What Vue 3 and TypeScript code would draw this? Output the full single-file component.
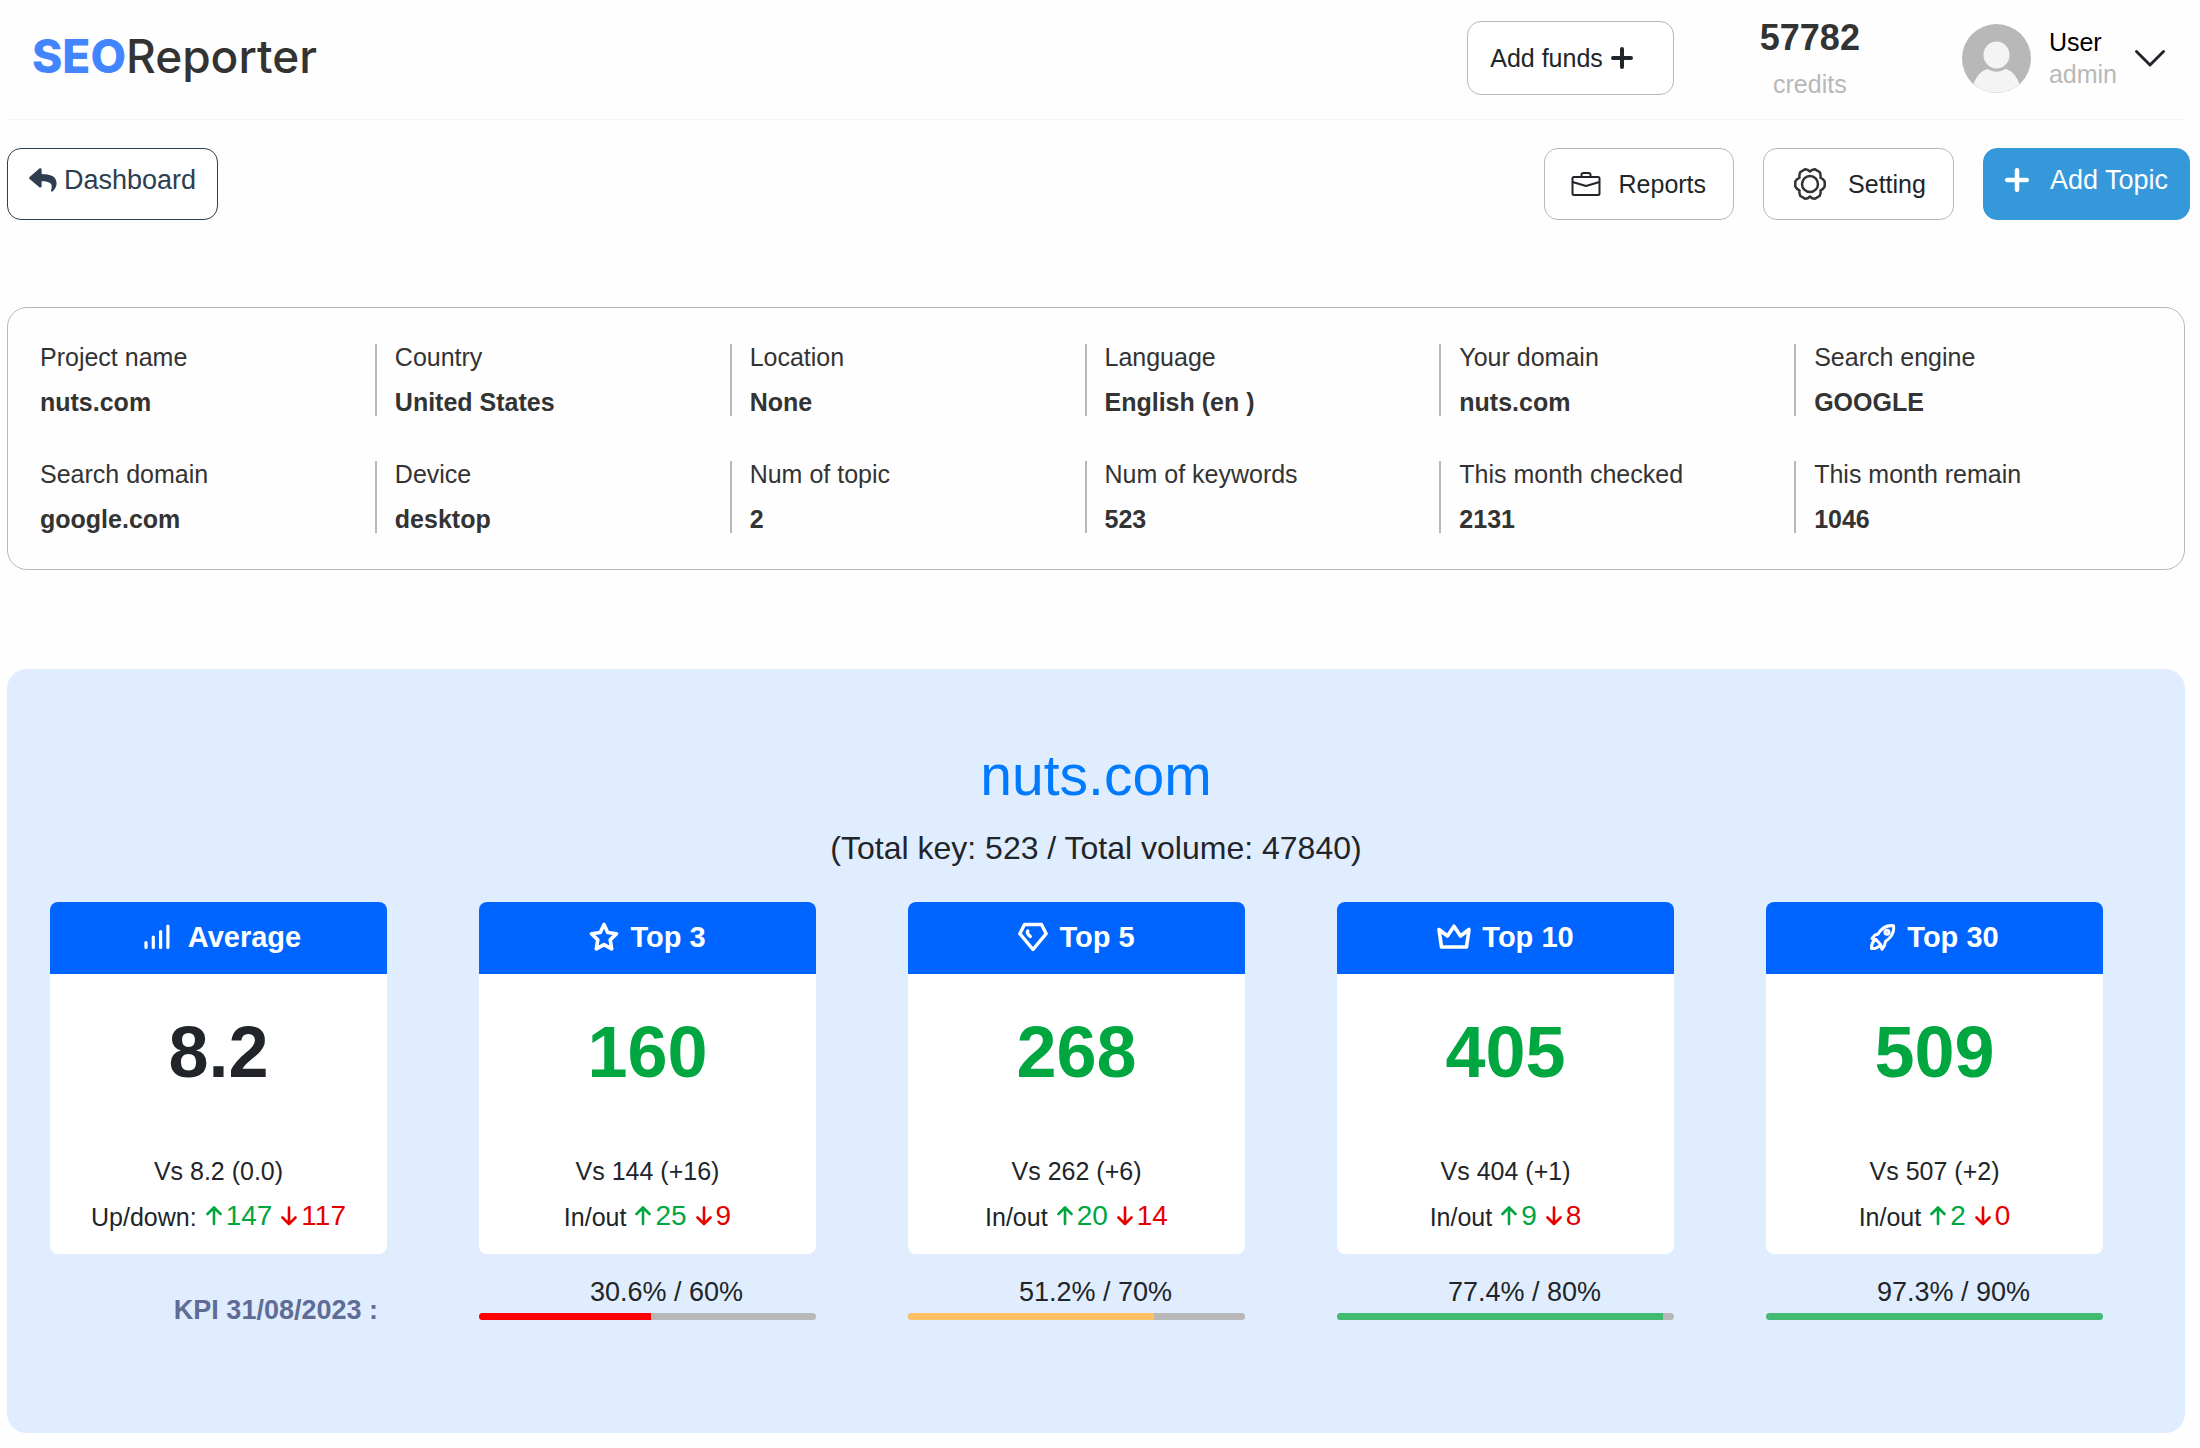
<script setup lang="ts">
interface Detail {
  label: string
  value: string
}

interface Kpi {
  current: number
  target: number
  color: string
}

interface Metric {
  icon: 'bars' | 'star' | 'diamond' | 'crown' | 'rocket'
  title: string
  value: string
  neutral?: boolean
  versus: string
  changeLabel: string
  up: number
  down: number
  kpi?: Kpi
}

const details: Detail[] = [
  { label: 'Project name', value: 'nuts.com' },
  { label: 'Country', value: 'United States' },
  { label: 'Location', value: 'None' },
  { label: 'Language', value: 'English (en )' },
  { label: 'Your domain', value: 'nuts.com' },
  { label: 'Search engine', value: 'GOOGLE' },
  { label: 'Search domain', value: 'google.com' },
  { label: 'Device', value: 'desktop' },
  { label: 'Num of topic', value: '2' },
  { label: 'Num of keywords', value: '523' },
  { label: 'This month checked', value: '2131' },
  { label: 'This month remain', value: '1046' },
]

const metrics: Metric[] = [
  { icon: 'bars', title: 'Average', value: '8.2', neutral: true, versus: 'Vs 8.2 (0.0)', changeLabel: 'Up/down:', up: 147, down: 117 },
  { icon: 'star', title: 'Top 3', value: '160', versus: 'Vs 144 (+16)', changeLabel: 'In/out', up: 25, down: 9, kpi: { current: 30.6, target: 60, color: '#ff0000' } },
  { icon: 'diamond', title: 'Top 5', value: '268', versus: 'Vs 262 (+6)', changeLabel: 'In/out', up: 20, down: 14, kpi: { current: 51.2, target: 70, color: '#ffc062' } },
  { icon: 'crown', title: 'Top 10', value: '405', versus: 'Vs 404 (+1)', changeLabel: 'In/out', up: 9, down: 8, kpi: { current: 77.4, target: 80, color: '#43ba72' } },
  { icon: 'rocket', title: 'Top 30', value: '509', versus: 'Vs 507 (+2)', changeLabel: 'In/out', up: 2, down: 0, kpi: { current: 97.3, target: 90, color: '#43ba72' } },
]

const progress = (kpi: Kpi): string => `${Math.min(100, (kpi.current / kpi.target) * 100)}%`
</script>

<template>
  <div class="page">
    <header class="topbar">
      <div class="logo"><span class="logo-accent">SEO</span>Reporter</div>
      <button type="button" class="btn funds">
        Add funds
        <svg width="22" height="22" viewBox="0 0 22 22" fill="none" stroke="currentColor" stroke-width="4" stroke-linecap="round">
          <path d="M11 2v18M2 11h18" />
        </svg>
      </button>
      <div class="credits">
        <strong>57782</strong>
        <span>credits</span>
      </div>
      <button type="button" class="account">
        <svg class="avatar" width="69" height="69" viewBox="0 0 69 69">
          <circle cx="34.500" cy="34.500" r="34.500" fill="#b8b8b8" />
          <ellipse cx="34.500" cy="31" rx="13" ry="13.500" fill="#f4f4f4" />
          <path d="M11.500 60C15 51 20 46 26 45c5 3.500 12 3.500 17 0 6 1 11 6 14.500 15A34.500 34.500 0 0 1 11.500 60z" fill="#f4f4f4" />
        </svg>
        <span class="account-text">
          <span class="account-name">User</span>
          <span class="account-role">admin</span>
        </span>
        <svg width="30" height="18" viewBox="0 0 30 18" fill="none" stroke="#212529" stroke-width="2.900" stroke-linecap="round" stroke-linejoin="round">
          <path d="M1.500 2.500L15 16 28.500 2.500" />
        </svg>
      </button>
    </header>

    <nav class="toolbar">
      <a class="btn solid-pad dashboard" href="#">
        <svg width="28" height="25" viewBox="0 0 28 25" fill="currentColor">
          <path d="M.600 8.900L10.400.500c.900-.700 2.200-.100 2.200 1v4.400c8.900.100 15 2.200 15 9.600 0 3.200-1.900 6.300-4.200 8-.700.500-1.700-.100-1.400-1 2.300-7.200-1-9.100-9.400-9.200v4.900c0 1.100-1.300 1.700-2.200 1L.600 10.900c-.600-.500-.600-1.400 0-2z" />
        </svg>
        Dashboard
      </a>
      <button type="button" class="btn reports">
        <svg width="30" height="26" viewBox="0 0 30 26" fill="none" stroke="#212529" stroke-width="2" stroke-linejoin="round">
          <rect x="1.500" y="6" width="27" height="18" rx="1.500" />
          <path d="M10.500 6V4q0-2 2-2h5q2 0 2 2v2M1.500 11L15 15 28.500 11" />
        </svg>
        Reports
      </button>
      <button type="button" class="btn setting">
        <svg width="32" height="32" viewBox="0 0 32 32" fill="none" stroke="#333" stroke-width="2.500" stroke-linejoin="round">
          <path d="M16 3.500Q18.500 1 21 1.300L25.600 4Q27 6.200 26.500 9.600 29.600 11 30.700 13.500V18.500Q29.600 21 26.500 22.400 27 25.800 25.600 28L21 30.700Q18.500 31 16 28.500 13.500 31 11 30.700L6.400 28Q5 25.800 5.500 22.400 2.400 21 1.300 18.500V13.500Q2.400 11 5.500 9.600 5 6.200 6.400 4L11 1.300Q13.500 1 16 3.500z" />
          <circle cx="16" cy="16" r="8" />
        </svg>
        Setting
      </button>
      <button type="button" class="btn solid-pad add-topic">
        <svg width="24" height="24" viewBox="0 0 24 24" fill="none" stroke="currentColor" stroke-width="4.500" stroke-linecap="round">
          <path d="M12 2.200v19.600M2.200 12h19.600" />
        </svg>
        Add Topic
      </button>
    </nav>

    <dl class="details">
      <div v-for="item in details" :key="item.label" class="detail">
        <dt>{{ item.label }}</dt>
        <dd>{{ item.value }}</dd>
      </div>
    </dl>

    <main class="summary">
      <h1>nuts.com</h1>
      <p class="totals">(Total key: 523 / Total volume: 47840)</p>
      <div class="metrics">
        <section v-for="metric in metrics" :key="metric.title" class="metric">
          <article class="card">
            <h2 :class="metric.icon">
              <svg v-if="metric.icon === 'bars'" width="26" height="26" viewBox="0 0 26 26" fill="none" stroke="#fff" stroke-width="3.200" stroke-linecap="round">
                <path d="M2 18.500v5M9.300 13v10.500M16.600 7.500v16M23.900 2v21.500" />
              </svg>
              <svg v-else-if="metric.icon === 'star'" width="30" height="30" viewBox="0 0 30 30" fill="none" stroke="#fff" stroke-width="3.600" stroke-linejoin="round">
                <path d="M15 2.500l3.700 8 8.800 1.200-6.300 6.200 1.500 9-7.700-4.300-7.700 4.300 1.500-9-6.300-6.200 8.800-1.200z" />
              </svg>
              <svg v-else-if="metric.icon === 'diamond'" width="30" height="30" viewBox="0 0 30 30" fill="none" stroke="#fff" stroke-width="3.400" stroke-linejoin="round" stroke-linecap="round">
                <path d="M6.500 2.500h17L28.200 11.700 15 27.500 1.800 11.700z" />
                <path d="M9.800 9q-1.500 2 2.500 5.500" />
              </svg>
              <svg v-else-if="metric.icon === 'crown'" width="34" height="28" viewBox="0 0 34 28" fill="none" stroke="#fff" stroke-width="3.600" stroke-linejoin="round">
                <path d="M2 6.500l8.500 6.500L17 3.200l6.500 9.800L32 6.500 29.500 24h-25z" />
              </svg>
              <svg v-else width="26" height="28" viewBox="0 0 26 28" fill="none" stroke="#fff" stroke-width="3" stroke-linejoin="round" stroke-linecap="round">
                <path d="M8 11C12 4.500 18 2 23.500 2.800 24.500 8.500 21 14.500 15.500 18.500M8 11l-3.200 1.200-2.800 3.300 4 1M15.500 18.500L14.500 22.500 12 26.300 10.500 21.500M6 16.500l4.500 5M6 16.500c-3.500 1.500-4.500 4.500-4.500 9 4 .500 7-1 9-4" />
                <circle cx="17" cy="9.300" r="2" />
              </svg>
              {{ metric.title }}
            </h2>
            <p class="value" :class="{ neutral: metric.neutral }">{{ metric.value }}</p>
            <p class="versus">{{ metric.versus }}</p>
            <p class="change">
              <span class="change-label">{{ metric.changeLabel }}</span>
              <span class="delta up">
                <svg width="16" height="20" viewBox="0 0 16 20" fill="none" stroke="currentColor" stroke-width="2.600" stroke-linecap="round" stroke-linejoin="round">
                  <path d="M8 18V1.500M1.500 8L8 1.500l6.500 6.500" />
                </svg>
                {{ metric.up }}
              </span>
              <span class="delta down">
                <svg width="16" height="20" viewBox="0 0 16 20" fill="none" stroke="currentColor" stroke-width="2.600" stroke-linecap="round" stroke-linejoin="round">
                  <path d="M8 1.500V18M1.500 11.500L8 18l6.500-6.500" />
                </svg>
                {{ metric.down }}
              </span>
            </p>
          </article>
          <div v-if="metric.kpi" class="kpi">
            <p class="kpi-text">{{ metric.kpi.current }}% / {{ metric.kpi.target }}%</p>
            <div class="track">
              <div class="fill" :style="{ width: progress(metric.kpi), background: metric.kpi.color }"></div>
            </div>
          </div>
          <p v-else class="kpi-date">KPI 31/08/2023 :</p>
        </section>
      </div>
    </main>
  </div>
</template>

<style>
body {
  margin: 0;
  background: #fefefe;
}
</style>

<style scoped>
.page {
  box-sizing: border-box;
  padding: 0 15px 15px 7px;
  color: #212529;
  font-family: "Liberation Sans", Arial, sans-serif;
  font-size: 25px;
  line-height: 32px;
}

.page * {
  box-sizing: border-box;
}

svg {
  display: block;
  flex: none;
}

h1,
h2,
p,
dl,
dd {
  margin: 0;
}

.topbar {
  display: flex;
  align-items: center;
  height: 120px;
  padding: 0 20px 3px 25px;
  border-bottom: 1px solid #f4f4f4;
}

.logo {
  margin-right: auto;
  padding-bottom: 4px;
  color: #333;
  font: 500 46px/56px Inter, sans-serif;
}

.logo-accent {
  color: #4285ff;
  font-weight: 800;
}

.btn {
  display: flex;
  align-items: center;
  height: 72px;
  border: 1px solid #b8b8b8;
  border-radius: 14px;
  background: #fff;
  color: #212529;
  font: inherit;
  text-decoration: none;
  white-space: nowrap;
}

.funds {
  gap: 8px;
  height: 74px;
  padding: 0 40px 0 22px;
}

.credits {
  display: flex;
  flex-direction: column;
  align-items: center;
  gap: 8px;
  margin: 0 102px 0 86px;
  color: #b8b8b8;
}

.credits strong {
  color: #333;
  font-size: 36px;
  line-height: 44px;
}

.account {
  display: flex;
  align-items: center;
  gap: 18px;
  padding: 0;
  border: 0;
  background: none;
  font: inherit;
  text-align: left;
}

.account-text {
  display: flex;
  flex-direction: column;
}

.account-name {
  color: #000;
}

.account-role {
  color: #b8b8b8;
}

.toolbar {
  display: flex;
  gap: 29px;
  margin: 28px -5px 0 0;
}

.solid-pad {
  padding: 0 21px 8px;
  font-size: 27px;
}

.dashboard {
  gap: 7px;
  margin-right: auto;
  border-color: #2c3e50;
  color: #2c3e50;
}

.reports {
  gap: 18px;
  padding: 0 27px 0 26px;
}

.setting {
  gap: 22px;
  padding: 0 27px 0 30px;
}

.add-topic {
  gap: 21px;
  border-color: #3498db;
  background: #3498db;
  color: #fff;
}

.details {
  display: grid;
  grid-template-columns: repeat(6, 1fr);
  row-gap: 45px;
  margin-top: 87px;
  padding: 36px 35px 36px 12px;
  border: 1px solid #b8b8b8;
  border-radius: 20px;
  color: #333;
  line-height: 27px;
}

.detail {
  display: flex;
  flex-direction: column;
  gap: 18px;
  padding-left: 18px;
  border-left: 2px solid #b8b8b8;
}

.detail:nth-child(6n + 1) {
  border-left-color: transparent;
}

.detail dd {
  font-weight: 700;
}

.summary {
  margin-top: 99px;
  padding: 74px 82px 107px 43px;
  border-radius: 20px;
  background: #e0edfe;
}

h1,
.totals {
  margin-right: -39px;
  text-align: center;
}

h1 {
  color: #007bff;
  font-size: 57px;
  font-weight: 400;
  line-height: 64px;
}

.totals {
  margin-top: 21px;
  font-size: 32px;
  line-height: 40px;
}

.metrics {
  display: grid;
  grid-template-columns: repeat(5, 1fr);
  gap: 92px;
  margin-top: 34px;
}

.card {
  overflow: hidden;
  padding-bottom: 14px;
  border-radius: 8px;
  background: #fff;
  text-align: center;
}

h2 {
  display: flex;
  justify-content: center;
  align-items: center;
  gap: 11px;
  height: 72px;
  padding-bottom: 2px;
  background: #0065ff;
  color: #fff;
  font-size: 29px;
  line-height: 32px;
}

h2.bars {
  gap: 18px;
  padding-left: 8px;
}

.value {
  margin-top: 38px;
  color: #00a63f;
  font-size: 72px;
  font-weight: 700;
  line-height: 80px;
}

.value.neutral {
  color: #212529;
}

.versus {
  margin-top: 63px;
}

.change {
  display: flex;
  justify-content: center;
  align-items: baseline;
  gap: 9px;
  margin-top: 6px;
  line-height: 46px;
}

.delta {
  display: flex;
  align-items: center;
  gap: 4px;
  font-size: 28px;
}

.up {
  color: #00a63f;
}

.down {
  color: #e60000;
}

.kpi {
  margin-top: 22px;
}

.kpi-text {
  padding-left: 38px;
  font-size: 27px;
  text-align: center;
}

.track {
  overflow: hidden;
  height: 7px;
  margin-top: 5px;
  border-radius: 4px;
  background: #b8b8b8;
}

.fill {
  height: 100%;
}

.kpi-date {
  margin-top: 40px;
  padding-right: 9px;
  color: #5f6c96;
  font-size: 27px;
  font-weight: 700;
  text-align: right;
}
</style>
